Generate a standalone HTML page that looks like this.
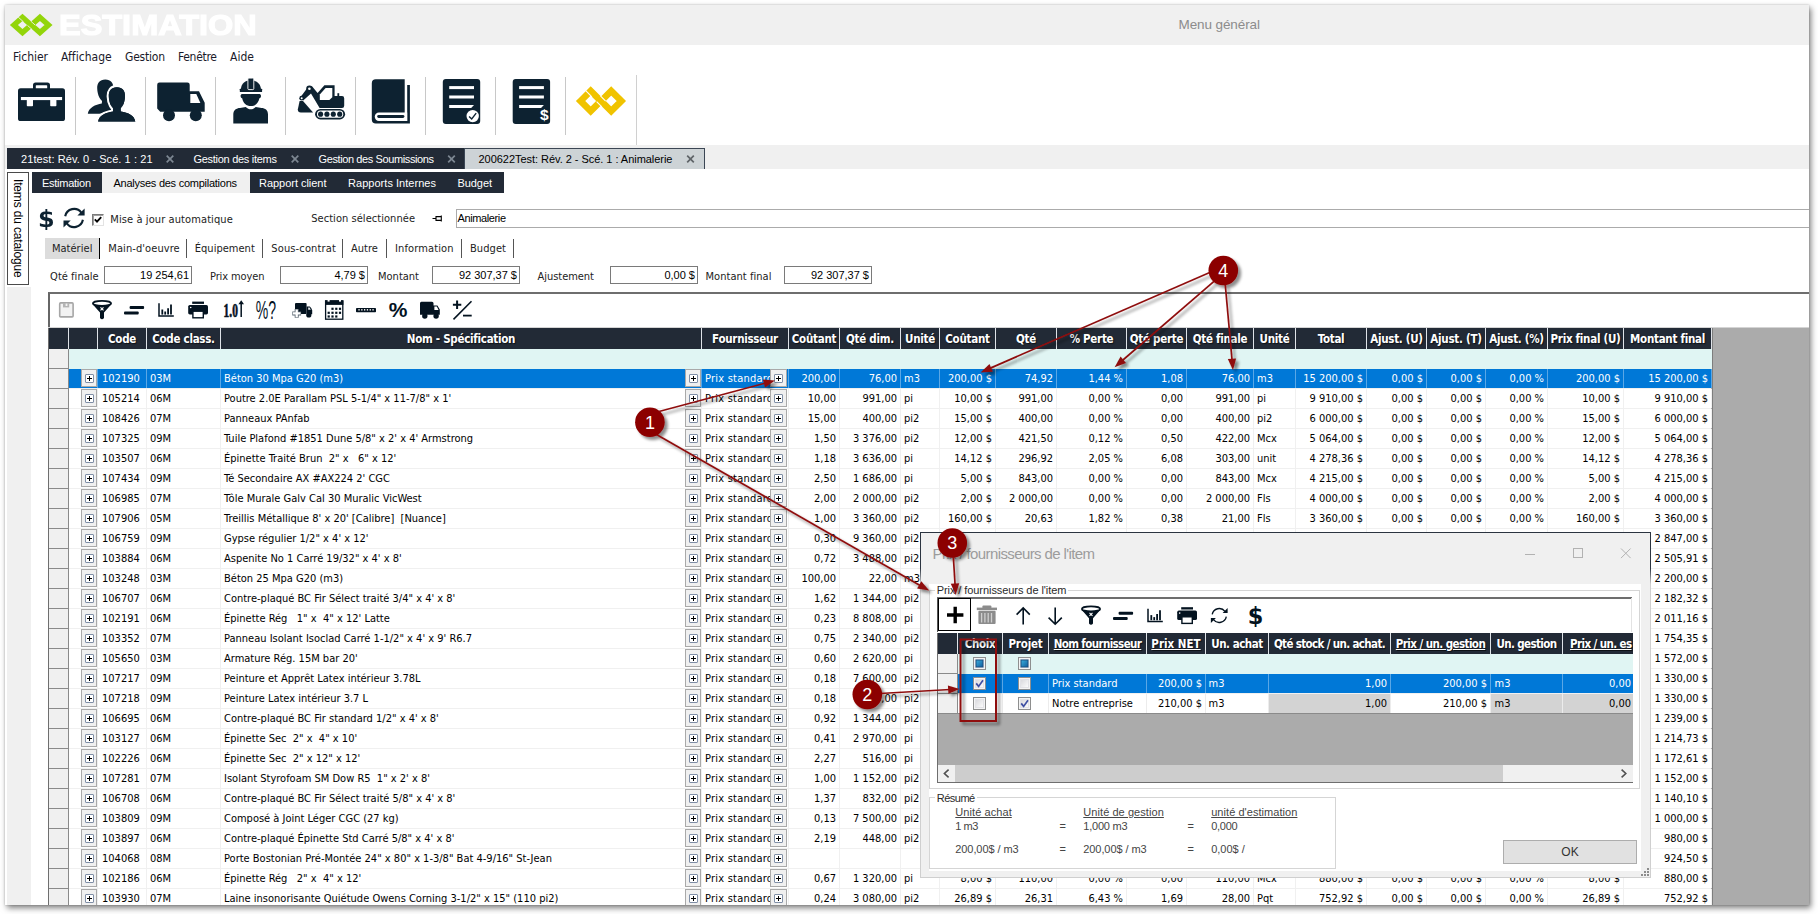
<!DOCTYPE html>
<html lang="fr"><head><meta charset="utf-8"><title>Estimation</title>
<style>
html,body{margin:0;padding:0;background:#fff;}
body{width:1818px;height:914px;overflow:hidden;position:relative;font-family:"DejaVu Sans Condensed","Liberation Sans",sans-serif;font-size:11px;color:#000;}
#shadow{position:absolute;left:5px;top:5px;width:1804px;height:900px;background:#fff;box-shadow:2px 3px 6px rgba(0,0,0,.5),0 0 2px rgba(0,0,0,.2);}
#clip{position:absolute;left:5px;top:5px;width:1804px;height:900px;overflow:hidden;}
#pg{position:absolute;left:-5px;top:-5px;width:1818px;height:914px;}
.a{position:absolute;}
.t{position:absolute;white-space:pre;line-height:14px;}
.lib{font-family:"Liberation Sans",sans-serif;}
.dj{font-family:"DejaVu Sans Condensed","Liberation Sans",sans-serif;}
/* main grid */
.r{position:absolute;left:49px;width:1662px;height:19px;border-bottom:1px solid #f0f0f0;background:#fff;}
.r i{position:absolute;top:0;height:19px;line-height:19px;font-style:normal;white-space:pre;overflow:hidden;box-sizing:border-box;border-right:1px solid #f0f0f0;}
.r.sel{background:#0078d7;color:#fff;}
.r.sel i{border-right-color:#5aa7e6;}
.r .ind{left:0;width:20px;height:20px;background:#f0f0f0;border-right:1px solid #8a8a8a;border-bottom:1px solid #8a8a8a;}
.r.sel .ind{border-right-color:#8a8a8a;}
.r .x0{left:20px;width:29px;background:#fff;}
.r.sel .x0{background:#0078d7;}
.pl{position:absolute;top:0;width:16px;height:18px;box-sizing:border-box;border:1px solid #a9a9a9;background:#f0f0f0;}
.pl:before{content:"";position:absolute;left:3px;top:4px;width:7px;height:7px;border:1px solid #7f8ea6;background:#fff;border-radius:1px;}
.pl:after{content:"";position:absolute;left:5px;top:8px;width:5px;height:1px;background:#000;box-shadow:0 0 0 0 #000;}
.pl b{position:absolute;left:7px;top:6px;width:1px;height:5px;background:#000;}
.L{padding-left:3px;text-align:left;}
.r .code{padding-left:4px;}
.r .four{letter-spacing:.22px;}
.R{padding-right:3px;text-align:right;}
.h{position:absolute;top:328px;height:21px;line-height:22px;font-size:11.5px;letter-spacing:-.28px;color:#fff;font-weight:bold;text-align:center;white-space:pre;box-sizing:border-box;border-right:1px solid #dfe3e8;text-shadow:1px 1px 1px rgba(0,0,0,.6);overflow:hidden;}
.dh{font-size:11.5px;}
.rs{font-size:11px;color:#454545;line-height:13px;}
.r .code{left:49px;width:49px;}
.r .cls{left:98px;width:74px;}
.r .nom{left:172px;width:481px;}
.r .four{left:653px;width:87px;}
.r .c1{left:740px;width:51px;}
.r .qd{left:791px;width:61px;}
.r .u1{left:852px;width:39px;}
.r .c2{left:891px;width:56px;}
.r .q{left:947px;width:61px;}
.r .p{left:1008px;width:70px;}
.r .qp{left:1078px;width:60px;}
.r .qf{left:1138px;width:67px;}
.r .u2{left:1205px;width:42px;}
.r .tot{left:1247px;width:71px;}
.r .au{left:1318px;width:60px;}
.r .at{left:1378px;width:59px;}
.r .ap{left:1437px;width:62px;}
.r .pf{left:1499px;width:76px;}
.r .mf{left:1575px;width:88px;}
</style></head>
<body>
<div id="shadow"></div>
<div id="clip"><div id="pg">
<div class="a" style="left:5px;top:5px;width:1804px;height:40px;background:#f0f0f0;"></div>
<svg class="a" style="left:5px;top:5px;" width="60" height="40" viewBox="0 0 60 40"><g transform="translate(26.20 20.00) scale(0.850 0.757)" fill="none" stroke="#93d50a" stroke-width="6.70" stroke-linejoin="miter"><path d="M-20.35 0 L-10.25 -10.10 L-0.15 0 L-10.25 10.10 Z"/><path d="M0.15 0 L10.25 -10.10 L20.35 0 L10.25 10.10 Z"/><g stroke="#f0f0f0" stroke-width="1.1"><path d="M-15.25 -10.36 L-9.05 -4.16"/><path d="M-4.30 0.59 L0.90 5.79"/><path d="M-0.50 -5.09 L4.70 0.11"/></g></g></svg>
<div class="t lib" id="brand" style="left:59px;top:8px;font-size:29.5px;line-height:34px;font-weight:bold;color:#fff;letter-spacing:0;-webkit-text-stroke:1.2px #fff;transform-origin:0 0;transform:scaleX(1.10);">ESTIMATION</div>
<div class="t lib" style="left:1178.5px;top:17px;font-size:13.5px;line-height:16px;font-weight:normal;color:#8c8c8c;letter-spacing:-0.097px;">Menu général</div>
<div class="t dj" style="left:13px;top:50px;font-size:12px;line-height:14px;font-weight:normal;color:#1a1a2a;letter-spacing:-0.034px;">Fichier</div>
<div class="t dj" style="left:61px;top:50px;font-size:12px;line-height:14px;font-weight:normal;color:#1a1a2a;letter-spacing:0.035px;">Affichage</div>
<div class="t dj" style="left:125px;top:50px;font-size:12px;line-height:14px;font-weight:normal;color:#1a1a2a;letter-spacing:-0.221px;">Gestion</div>
<div class="t dj" style="left:178px;top:50px;font-size:12px;line-height:14px;font-weight:normal;color:#1a1a2a;letter-spacing:-0.289px;">Fenêtre</div>
<div class="t dj" style="left:230px;top:50px;font-size:12px;line-height:14px;font-weight:normal;color:#1a1a2a;letter-spacing:0.036px;">Aide</div>
<div class="a" style="left:75px;top:77px;width:1px;height:58px;background:#c8c8c8;"></div>
<div class="a" style="left:145px;top:77px;width:1px;height:58px;background:#c8c8c8;"></div>
<div class="a" style="left:215px;top:77px;width:1px;height:58px;background:#c8c8c8;"></div>
<div class="a" style="left:285px;top:77px;width:1px;height:58px;background:#c8c8c8;"></div>
<div class="a" style="left:355px;top:77px;width:1px;height:58px;background:#c8c8c8;"></div>
<div class="a" style="left:425px;top:77px;width:1px;height:58px;background:#c8c8c8;"></div>
<div class="a" style="left:495px;top:77px;width:1px;height:58px;background:#c8c8c8;"></div>
<div class="a" style="left:565px;top:77px;width:1px;height:58px;background:#c8c8c8;"></div>
<div class="a" style="left:636px;top:75px;width:1px;height:70px;background:#d0d0d0;"></div>
<div class="a" style="left:5px;top:145px;width:1804px;height:24px;background:#f0f0f0;"></div>
<div class="a" style="left:7px;top:287px;width:24px;height:622px;background:#f0f0f0;"></div>
<svg class="a" style="left:0;top:70px" width="640" height="70" viewBox="0 70 640 70"><g fill="#0d2231"><rect x="18" y="88.3" width="47" height="32.7" rx="2.6"/><path fill-rule="evenodd" d="M35.6 82.4 H47.4 A2.6 2.6 0 0 1 50 85 V90 H33 V85 A2.6 2.6 0 0 1 35.6 82.4 Z M36.4 85.2 A.6 .6 0 0 0 35.8 85.8 V89 H47.2 V85.8 A.6 .6 0 0 0 46.6 85.2 Z"/><g fill="#fff"><rect x="20.9" y="97" width="41.2" height="3.1"/><rect x="26.8" y="99" width="6.2" height="7.3" rx=".8"/><rect x="50.2" y="99" width="6.2" height="7.3" rx=".8"/></g><path d="M105.3 79.4 C111 79.4 113.5 83 113.4 88.2 C113.3 95.2 110 102 105.3 102 C100.6 102 97.3 95.2 97.2 88.2 C97.1 83 99.6 79.4 105.3 79.4 Z"/><path d="M87.8 113.8 C88.5 107.6 95.5 104.4 101.8 103.4 L102.2 99 H110 L112 111 C106 112 102 113 99.5 113.8 Z"/><g stroke="#fff" stroke-width="4.4" paint-order="stroke" stroke-linejoin="round"><path d="M116.9 87.3 C122.6 87.3 125.1 91 125 96.2 C124.9 103.2 121.6 110 116.9 110 C112.2 110 108.9 103.2 108.8 96.2 C108.7 91 111.2 87.3 116.9 87.3 Z"/><path d="M98.1 121.7 C99 115.6 105.5 112.8 113 111.6 L113.4 106 H120.4 L120.8 111.6 C128.3 112.8 134.5 115.6 135.3 121.7 Z"/></g><path d="M116.9 87.3 C122.6 87.3 125.1 91 125 96.2 C124.9 103.2 121.6 110 116.9 110 C112.2 110 108.9 103.2 108.8 96.2 C108.7 91 111.2 87.3 116.9 87.3 Z"/><path d="M98.1 121.7 C99 115.6 105.5 112.8 113 111.6 L113.4 106 H120.4 L120.8 111.6 C128.3 112.8 134.5 115.6 135.3 121.7 Z"/><rect x="96" y="121.8" width="42" height="3" fill="#fff"/><path d="M159.6 82.4 H187.4 A2.3 2.3 0 0 1 189.7 84.7 V91.2 H199 L204.7 102.8 V111.7 H160.2 L157.2 108.6 V84.7 A2.3 2.3 0 0 1 159.6 82.4 Z"/><path fill="#fff" d="M190.3 94 H196.3 L200.4 103.1 H190.3 Z"/><circle cx="169" cy="115.2" r="6"/><circle cx="195.8" cy="115.2" r="6"/><path d="M240.9 89.2 C241.2 83.5 245.5 80.3 251 80.3 C256.5 80.3 260.6 83.5 261 89.2 Z"/><rect x="239.8" y="88.7" width="22.3" height="3.3" rx=".6"/><rect x="247.9" y="78.1" width="5.9" height="11.5" rx="1" stroke="#fff" stroke-width=".9"/><path d="M242 94 H259.6 C261.6 94.3 261.4 97.9 259.4 98.3 C258.5 103.4 255 106.1 250.8 106.1 C246.6 106.1 243 103.4 242.2 98.3 C240.2 97.9 240 94.3 242 94 Z"/><path d="M233.3 123.5 V114.5 C233.3 109.8 236.5 108 240 107.9 L245.8 107 C247.4 108.7 249 109.3 250.8 109.3 C252.6 109.3 254.1 108.7 255.7 107 L261.5 107.9 C265 108 268 109.8 268 114.5 V123.5 Z"/><rect x="315.1" y="108.9" width="30" height="10.5" rx="5.25"/><rect x="317" y="110.6" width="26.2" height="7.1" rx="3.55" fill="#fff"/><circle cx="320.6" cy="114.15" r="2.55"/><circle cx="326.9" cy="114.15" r="2.55"/><circle cx="333.3" cy="114.15" r="2.55"/><circle cx="339.7" cy="114.15" r="2.55"/><path d="M324.4 85.3 H334.6 V96 H342 A2.2 2.2 0 0 1 344.2 98.2 V105.7 A2.2 2.2 0 0 1 342 107.9 H319.6 L311 93.5 L303.2 100.6 L300.4 97.2 L308.6 86.2 L312.2 86.6 L317.6 93 Z"/><path fill="#fff" d="M319.8 94.6 L325.6 88.1 H332.3 V97.2 L329.4 100 H319.8 Z"/><rect x="337.4" y="93.2" width="1.8" height="3.4"/><circle cx="309.4" cy="88.8" r="3.2"/><circle cx="309.4" cy="88.8" r="1.3" fill="#fff"/><circle cx="301.7" cy="98.2" r="2.4"/><circle cx="301.7" cy="98.2" r="1" fill="#fff"/><path d="M299.6 101 H303 L313.1 112.5 H300.8 A3 3 0 0 1 297.8 109.5 Z"/><path d="M375.8 79.2 H404.7 V120.9 H407.2 V84.9 H409.9 V123.5 H375.8 A4 4 0 0 1 371.8 119.5 V83.2 A4 4 0 0 1 375.8 79.2 Z"/><path fill="#fff" d="M378.9 112.6 H407.2 V120.9 H378.9 A4.15 4.15 0 0 1 378.9 112.6 Z"/><rect x="377.2" y="115" width="27.2" height="2.9" rx="1.45"/><rect x="442.8" y="79" width="37.4" height="44.9" rx="3"/><g fill="#fff"><rect x="449.2" y="86.1" width="24.8" height="3"/><rect x="449.2" y="95.5" width="24.8" height="3"/><path d="M449.2 104.9 H474.0 L471.2 107.9 H449.2 Z"/></g><rect x="512.7" y="79" width="37.4" height="44.9" rx="3"/><g fill="#fff"><rect x="519.1" y="86.1" width="24.8" height="3"/><rect x="519.1" y="95.5" width="24.8" height="3"/><path d="M519.1 104.9 H543.9 L541.1 107.9 H519.1 Z"/></g><circle cx="472.7" cy="116.1" r="6.2" fill="#fff"/><path d="M469.1 116.4 L471.7 118.9 L476.2 113.1" fill="none" stroke="#0d2231" stroke-width="1.4"/><text x="544.2" y="120.4" text-anchor="middle" fill="#fff" font-family="Liberation Sans, sans-serif" font-weight="bold" font-size="15.5">$</text></g><g transform="translate(600.95 101.00) scale(1.000 1.000)" fill="none" stroke="#f0c300" stroke-width="6.70" stroke-linejoin="miter"><path d="M-20.35 0 L-10.25 -10.10 L-0.15 0 L-10.25 10.10 Z"/><path d="M0.15 0 L10.25 -10.10 L20.35 0 L10.25 10.10 Z"/><g stroke="#fff" stroke-width="1.1"><path d="M-15.25 -10.36 L-9.05 -4.16"/><path d="M-4.30 0.59 L0.90 5.79"/><path d="M-0.50 -5.09 L4.70 0.11"/></g></g></svg>
<div class="a" style="left:7px;top:148px;width:458px;height:21px;background:#222a36;"></div>
<div class="a" style="left:464px;top:148px;width:241px;height:21px;background:#cdd3d6;border:1px solid #3b4654;border-bottom:none;box-sizing:border-box;"></div>
<div class="t lib" style="left:21px;top:152px;font-size:11px;line-height:14px;font-weight:normal;color:#fff;letter-spacing:0.077px;">21test: Rév. 0 - Scé. 1 : 21</div>
<div class="t lib" style="left:193.5px;top:152px;font-size:11px;line-height:14px;font-weight:normal;color:#fff;letter-spacing:-0.284px;">Gestion des items</div>
<div class="t lib" style="left:318.5px;top:152px;font-size:11px;line-height:14px;font-weight:normal;color:#fff;letter-spacing:-0.392px;">Gestion des Soumissions</div>
<div class="t lib" style="left:478.5px;top:152px;font-size:11px;line-height:14px;font-weight:normal;color:#000;letter-spacing:-0.038px;">200622Test: Rév. 2 - Scé. 1 : Animalerie</div>
<svg class="a" style="left:0;top:148px" width="720" height="22" viewBox="0 148 720 22"><path d="M166.7 155.7 l6.6 6.6 m0 -6.6 l-6.6 6.6" stroke="#7d8792" stroke-width="1.7" fill="none"/><path d="M291.7 155.7 l6.6 6.6 m0 -6.6 l-6.6 6.6" stroke="#7d8792" stroke-width="1.7" fill="none"/><path d="M448.2 155.7 l6.6 6.6 m0 -6.6 l-6.6 6.6" stroke="#7d8792" stroke-width="1.7" fill="none"/><path d="M687.2 155.7 l6.6 6.6 m0 -6.6 l-6.6 6.6" stroke="#5f6468" stroke-width="1.7" fill="none"/></svg>
<div class="a" style="left:7px;top:172px;width:22px;height:113px;background:#fff;border:1px solid #4a4a4a;box-sizing:border-box;"></div>
<div class="t lib" style="left:25px;top:179.2px;font-size:12px;line-height:14px;font-weight:normal;color:#000;letter-spacing:-0.159px;transform-origin:0 0;transform:rotate(90deg);">Items du catalogue</div>
<div class="a" style="left:32px;top:172px;width:472px;height:21px;background:#222a36;"></div>
<div class="a" style="left:102px;top:172px;width:148px;height:21px;background:#f0f0f0;"></div>
<div class="t lib" style="left:42px;top:176px;font-size:11px;line-height:14px;font-weight:normal;color:#fff;letter-spacing:-0.262px;">Estimation</div>
<div class="t lib" style="left:113.5px;top:176px;font-size:11px;line-height:14px;font-weight:normal;color:#000;letter-spacing:-0.255px;">Analyses des compilations</div>
<div class="t lib" style="left:259px;top:176px;font-size:11px;line-height:14px;font-weight:normal;color:#fff;letter-spacing:-0.029px;">Rapport client</div>
<div class="t lib" style="left:348px;top:176px;font-size:11px;line-height:14px;font-weight:normal;color:#fff;letter-spacing:0.035px;">Rapports Internes</div>
<div class="t lib" style="left:457.5px;top:176px;font-size:11px;line-height:14px;font-weight:normal;color:#fff;letter-spacing:-0.075px;">Budget</div>
<div class="t" style="left:38.4px;top:204.6px;font-family:'DejaVu Sans',sans-serif;font-weight:bold;font-size:23px;line-height:28px;transform-origin:0 0;transform:scaleX(1.04);color:#0d2231;">$</div>
<svg class="a" style="left:60px;top:205px" width="30" height="26" viewBox="60 205 30 26"><g fill="none" stroke="#0d2231" stroke-width="2.1"><path d="M65.2 216.2 A9 9 0 0 1 81.3 212.6"/><path d="M82.9 219.8 A9 9 0 0 1 66.8 223.4"/></g><path fill="#0d2231" d="M84.6 208.4 V215.6 H77.4 Z"/><path fill="#0d2231" d="M63.5 227.6 V220.4 H70.7 Z"/></svg>
<div class="a" style="left:92px;top:214px;width:12px;height:12px;box-sizing:border-box;background:#fff;border:1px solid #e3e3e3;border-top-color:#7a7a7a;border-left-color:#7a7a7a;box-shadow:inset 1px 1px 0 #a0a0a0;"></div>
<svg class="a" style="left:92px;top:214px" width="12" height="12" viewBox="0 0 12 12"><path d="M2.8 5.4 L5 7.6 L9.2 3.2" fill="none" stroke="#000" stroke-width="1.9"/></svg>
<div class="t dj" style="left:110.3px;top:213px;font-size:11px;line-height:14px;font-weight:normal;color:#222;letter-spacing:0.094px;">Mise à jour automatique</div>
<div class="t dj" style="left:311.2px;top:212px;font-size:11px;line-height:14px;font-weight:normal;color:#222;letter-spacing:0.05px;">Section sélectionnée</div>
<svg class="a" style="left:431px;top:213px" width="13" height="11" viewBox="0 0 13 11"><path d="M1.5 5.5 H5 M5 3 V8 M5 3.6 H10.3 V7.4 H5 M10.3 2.6 V8.4" fill="none" stroke="#000" stroke-width="1.1"/></svg>
<div class="a" style="left:456px;top:209px;width:1370px;height:19px;background:#fff;border:1px solid #ababab;box-sizing:border-box;"></div>
<div class="t lib" style="left:457.5px;top:211px;font-size:11px;line-height:14px;font-weight:normal;color:#000;letter-spacing:-0.385px;">Animalerie</div>
<div class="a" style="left:45px;top:238px;width:54px;height:21px;background:#dcdcdc;"></div>
<div class="a" style="left:99px;top:238px;width:1px;height:21px;background:#000;"></div>
<div class="a" style="left:186px;top:239px;width:1px;height:19px;background:#555;"></div>
<div class="a" style="left:262px;top:239px;width:1px;height:19px;background:#555;"></div>
<div class="a" style="left:342px;top:239px;width:1px;height:19px;background:#555;"></div>
<div class="a" style="left:386px;top:239px;width:1px;height:19px;background:#555;"></div>
<div class="a" style="left:461px;top:239px;width:1px;height:19px;background:#555;"></div>
<div class="a" style="left:513px;top:239px;width:1px;height:19px;background:#555;"></div>
<div class="t dj" style="left:51.9px;top:242px;font-size:11px;line-height:14px;font-weight:normal;color:#222;letter-spacing:0.038px;">Matériel</div>
<div class="t dj" style="left:108.3px;top:242px;font-size:11px;line-height:14px;font-weight:normal;color:#222;letter-spacing:0.084px;">Main-d'oeuvre</div>
<div class="t dj" style="left:194.8px;top:242px;font-size:11px;line-height:14px;font-weight:normal;color:#222;letter-spacing:0.019px;">Équipement</div>
<div class="t dj" style="left:271.3px;top:242px;font-size:11px;line-height:14px;font-weight:normal;color:#222;letter-spacing:0.136px;">Sous-contrat</div>
<div class="t dj" style="left:351px;top:242px;font-size:11px;line-height:14px;font-weight:normal;color:#222;letter-spacing:-0.011px;">Autre</div>
<div class="t dj" style="left:395px;top:242px;font-size:11px;line-height:14px;font-weight:normal;color:#222;letter-spacing:0.123px;">Information</div>
<div class="t dj" style="left:470px;top:242px;font-size:11px;line-height:14px;font-weight:normal;color:#222;letter-spacing:0.078px;">Budget</div>
<div class="t dj" style="left:50.1px;top:270px;font-size:11px;line-height:14px;font-weight:normal;color:#222;letter-spacing:0.03px;">Qté finale</div>
<div class="t dj" style="left:210px;top:270px;font-size:11px;line-height:14px;font-weight:normal;color:#222;letter-spacing:-0.122px;">Prix moyen</div>
<div class="t dj" style="left:378px;top:270px;font-size:11px;line-height:14px;font-weight:normal;color:#222;letter-spacing:0.005px;">Montant</div>
<div class="t dj" style="left:537.5px;top:270px;font-size:11px;line-height:14px;font-weight:normal;color:#222;letter-spacing:-0.035px;">Ajustement</div>
<div class="t dj" style="left:705.5px;top:270px;font-size:11px;line-height:14px;font-weight:normal;color:#222;letter-spacing:0.047px;">Montant final</div>
<div class="a lib" style="left:104px;top:266px;width:88px;height:18px;box-sizing:border-box;border:1px solid #7a7a7a;background:#fff;text-align:right;padding-right:2px;font-size:11px;line-height:16px;white-space:pre;">19 254,61</div>
<div class="a lib" style="left:280px;top:266px;width:88px;height:18px;box-sizing:border-box;border:1px solid #7a7a7a;background:#fff;text-align:right;padding-right:2px;font-size:11px;line-height:16px;white-space:pre;">4,79 $</div>
<div class="a lib" style="left:432px;top:266px;width:88px;height:18px;box-sizing:border-box;border:1px solid #7a7a7a;background:#fff;text-align:right;padding-right:2px;font-size:11px;line-height:16px;white-space:pre;">92 307,37 $</div>
<div class="a lib" style="left:610px;top:266px;width:88px;height:18px;box-sizing:border-box;border:1px solid #7a7a7a;background:#fff;text-align:right;padding-right:2px;font-size:11px;line-height:16px;white-space:pre;">0,00 $</div>
<div class="a lib" style="left:784px;top:266px;width:88px;height:18px;box-sizing:border-box;border:1px solid #7a7a7a;background:#fff;text-align:right;padding-right:2px;font-size:11px;line-height:16px;white-space:pre;">92 307,37 $</div>
<div class="a" style="left:48px;top:292px;width:1770px;height:35px;background:#fff;border-top:2px solid #6e6e6e;border-left:2px solid #666;box-sizing:border-box;"></div>
<div class="a" style="left:48px;top:327px;width:1770px;height:1px;background:#d4d4d4;"></div>
<div class="a" style="left:48px;top:328px;width:1px;height:590px;background:#6e6e6e;"></div>
<div class="a" style="left:49px;top:328px;width:1770px;height:590px;background:#ababab;"></div>
<div class="a" style="left:1712px;top:328px;width:1px;height:590px;background:#7d7d7d;"></div>
<div class="a" style="left:49px;top:328px;width:1663px;height:21px;background:#222a36;"></div>
<div class="h" style="left:49px;width:20px;"></div>
<div class="h" style="left:69px;width:29px;"></div>
<div class="h" style="left:98px;width:49px;">Code</div>
<div class="h" style="left:147px;width:74px;">Code class.</div>
<div class="h" style="left:221px;width:481px;">Nom - Spécification</div>
<div class="h" style="left:702px;width:87px;">Fournisseur</div>
<div class="h" style="left:789px;width:51px;">Coûtant</div>
<div class="h" style="left:840px;width:61px;">Qté dim.</div>
<div class="h" style="left:901px;width:39px;">Unité</div>
<div class="h" style="left:940px;width:56px;">Coûtant</div>
<div class="h" style="left:996px;width:61px;">Qté</div>
<div class="h" style="left:1057px;width:70px;">% Perte</div>
<div class="h" style="left:1127px;width:60px;">Qté perte</div>
<div class="h" style="left:1187px;width:67px;">Qté finale</div>
<div class="h" style="left:1254px;width:42px;">Unité</div>
<div class="h" style="left:1296px;width:71px;">Total</div>
<div class="h" style="left:1367px;width:60px;">Ajust. (U)</div>
<div class="h" style="left:1427px;width:59px;">Ajust. (T)</div>
<div class="h" style="left:1486px;width:62px;">Ajust. (%)</div>
<div class="h" style="left:1548px;width:76px;">Prix final (U)</div>
<div class="h" style="left:1624px;width:88px;">Montant final</div>
<div class="a" style="left:49px;top:349px;width:1663px;height:20px;background:#e0f5f3;"></div>
<div class="a" style="left:49px;top:349px;width:19px;height:19px;background:#f0f0f0;border-right:1px solid #8a8a8a;border-bottom:1px solid #8a8a8a;"></div>
<div class="r sel" style="top:369px"><i class="ind"></i><i class="x0"></i><span class="pl" style="left:32px"><b></b></span><i class="code L">102190</i><i class="cls L">03M</i><i class="nom L">Béton 30 Mpa G20 (m3)</i><i class="four L">Prix standard</i><i class="c1 R">200,00</i><i class="qd R">76,00</i><i class="u1 L">m3</i><i class="c2 R">200,00 $</i><i class="q R">74,92</i><i class="p R">1,44 %</i><i class="qp R">1,08</i><i class="qf R">76,00</i><i class="u2 L">m3</i><i class="tot R">15 200,00 $</i><i class="au R">0,00 $</i><i class="at R">0,00 $</i><i class="ap R">0,00 %</i><i class="pf R">200,00 $</i><i class="mf R">15 200,00 $</i><span class="pl" style="left:636px"><b></b></span><span class="pl" style="left:721px;width:17px"><b></b></span></div>
<div class="r" style="top:389px"><i class="ind"></i><i class="x0"></i><span class="pl" style="left:32px"><b></b></span><i class="code L">105214</i><i class="cls L">06M</i><i class="nom L">Poutre 2.0E Parallam PSL 5-1/4" x 11-7/8" x 1'</i><i class="four L">Prix standard</i><i class="c1 R">10,00</i><i class="qd R">991,00</i><i class="u1 L">pi</i><i class="c2 R">10,00 $</i><i class="q R">991,00</i><i class="p R">0,00 %</i><i class="qp R">0,00</i><i class="qf R">991,00</i><i class="u2 L">pi</i><i class="tot R">9 910,00 $</i><i class="au R">0,00 $</i><i class="at R">0,00 $</i><i class="ap R">0,00 %</i><i class="pf R">10,00 $</i><i class="mf R">9 910,00 $</i><span class="pl" style="left:636px"><b></b></span><span class="pl" style="left:721px;width:17px"><b></b></span></div>
<div class="r" style="top:409px"><i class="ind"></i><i class="x0"></i><span class="pl" style="left:32px"><b></b></span><i class="code L">108426</i><i class="cls L">07M</i><i class="nom L">Panneaux PAnfab</i><i class="four L">Prix standard</i><i class="c1 R">15,00</i><i class="qd R">400,00</i><i class="u1 L">pi2</i><i class="c2 R">15,00 $</i><i class="q R">400,00</i><i class="p R">0,00 %</i><i class="qp R">0,00</i><i class="qf R">400,00</i><i class="u2 L">pi2</i><i class="tot R">6 000,00 $</i><i class="au R">0,00 $</i><i class="at R">0,00 $</i><i class="ap R">0,00 %</i><i class="pf R">15,00 $</i><i class="mf R">6 000,00 $</i><span class="pl" style="left:636px"><b></b></span><span class="pl" style="left:721px;width:17px"><b></b></span></div>
<div class="r" style="top:429px"><i class="ind"></i><i class="x0"></i><span class="pl" style="left:32px"><b></b></span><i class="code L">107325</i><i class="cls L">09M</i><i class="nom L">Tuile Plafond #1851 Dune 5/8" x 2' x 4' Armstrong</i><i class="four L">Prix standard</i><i class="c1 R">1,50</i><i class="qd R">3 376,00</i><i class="u1 L">pi2</i><i class="c2 R">12,00 $</i><i class="q R">421,50</i><i class="p R">0,12 %</i><i class="qp R">0,50</i><i class="qf R">422,00</i><i class="u2 L">Mcx</i><i class="tot R">5 064,00 $</i><i class="au R">0,00 $</i><i class="at R">0,00 $</i><i class="ap R">0,00 %</i><i class="pf R">12,00 $</i><i class="mf R">5 064,00 $</i><span class="pl" style="left:636px"><b></b></span><span class="pl" style="left:721px;width:17px"><b></b></span></div>
<div class="r" style="top:449px"><i class="ind"></i><i class="x0"></i><span class="pl" style="left:32px"><b></b></span><i class="code L">103507</i><i class="cls L">06M</i><i class="nom L">Épinette Traité Brun  2" x   6" x 12'</i><i class="four L">Prix standard</i><i class="c1 R">1,18</i><i class="qd R">3 636,00</i><i class="u1 L">pi</i><i class="c2 R">14,12 $</i><i class="q R">296,92</i><i class="p R">2,05 %</i><i class="qp R">6,08</i><i class="qf R">303,00</i><i class="u2 L">unit</i><i class="tot R">4 278,36 $</i><i class="au R">0,00 $</i><i class="at R">0,00 $</i><i class="ap R">0,00 %</i><i class="pf R">14,12 $</i><i class="mf R">4 278,36 $</i><span class="pl" style="left:636px"><b></b></span><span class="pl" style="left:721px;width:17px"><b></b></span></div>
<div class="r" style="top:469px"><i class="ind"></i><i class="x0"></i><span class="pl" style="left:32px"><b></b></span><i class="code L">107434</i><i class="cls L">09M</i><i class="nom L">Té Secondaire AX #AX224 2' CGC</i><i class="four L">Prix standard</i><i class="c1 R">2,50</i><i class="qd R">1 686,00</i><i class="u1 L">pi</i><i class="c2 R">5,00 $</i><i class="q R">843,00</i><i class="p R">0,00 %</i><i class="qp R">0,00</i><i class="qf R">843,00</i><i class="u2 L">Mcx</i><i class="tot R">4 215,00 $</i><i class="au R">0,00 $</i><i class="at R">0,00 $</i><i class="ap R">0,00 %</i><i class="pf R">5,00 $</i><i class="mf R">4 215,00 $</i><span class="pl" style="left:636px"><b></b></span><span class="pl" style="left:721px;width:17px"><b></b></span></div>
<div class="r" style="top:489px"><i class="ind"></i><i class="x0"></i><span class="pl" style="left:32px"><b></b></span><i class="code L">106985</i><i class="cls L">07M</i><i class="nom L">Tôle Murale Galv Cal 30 Muralic VicWest</i><i class="four L">Prix standard</i><i class="c1 R">2,00</i><i class="qd R">2 000,00</i><i class="u1 L">pi2</i><i class="c2 R">2,00 $</i><i class="q R">2 000,00</i><i class="p R">0,00 %</i><i class="qp R">0,00</i><i class="qf R">2 000,00</i><i class="u2 L">Fls</i><i class="tot R">4 000,00 $</i><i class="au R">0,00 $</i><i class="at R">0,00 $</i><i class="ap R">0,00 %</i><i class="pf R">2,00 $</i><i class="mf R">4 000,00 $</i><span class="pl" style="left:636px"><b></b></span><span class="pl" style="left:721px;width:17px"><b></b></span></div>
<div class="r" style="top:509px"><i class="ind"></i><i class="x0"></i><span class="pl" style="left:32px"><b></b></span><i class="code L">107906</i><i class="cls L">05M</i><i class="nom L">Treillis Métallique 8' x 20' [Calibre]  [Nuance]</i><i class="four L">Prix standard</i><i class="c1 R">1,00</i><i class="qd R">3 360,00</i><i class="u1 L">pi2</i><i class="c2 R">160,00 $</i><i class="q R">20,63</i><i class="p R">1,82 %</i><i class="qp R">0,38</i><i class="qf R">21,00</i><i class="u2 L">Fls</i><i class="tot R">3 360,00 $</i><i class="au R">0,00 $</i><i class="at R">0,00 $</i><i class="ap R">0,00 %</i><i class="pf R">160,00 $</i><i class="mf R">3 360,00 $</i><span class="pl" style="left:636px"><b></b></span><span class="pl" style="left:721px;width:17px"><b></b></span></div>
<div class="r" style="top:529px"><i class="ind"></i><i class="x0"></i><span class="pl" style="left:32px"><b></b></span><i class="code L">106759</i><i class="cls L">09M</i><i class="nom L">Gypse régulier 1/2" x 4' x 12'</i><i class="four L">Prix standard</i><i class="c1 R">0,30</i><i class="qd R">9 360,00</i><i class="u1 L">pi2</i><i class="c2 R">14,60 $</i><i class="q R">192,12</i><i class="p R">1,50 %</i><i class="qp R">2,88</i><i class="qf R">195,00</i><i class="u2 L">Fls</i><i class="tot R">2 847,00 $</i><i class="au R">0,00 $</i><i class="at R">0,00 $</i><i class="ap R">0,00 %</i><i class="pf R">14,60 $</i><i class="mf R">2 847,00 $</i><span class="pl" style="left:636px"><b></b></span><span class="pl" style="left:721px;width:17px"><b></b></span></div>
<div class="r" style="top:549px"><i class="ind"></i><i class="x0"></i><span class="pl" style="left:32px"><b></b></span><i class="code L">103884</i><i class="cls L">06M</i><i class="nom L">Aspenite No 1 Carré 19/32" x 4' x 8'</i><i class="four L">Prix standard</i><i class="c1 R">0,72</i><i class="qd R">3 488,00</i><i class="u1 L">pi2</i><i class="c2 R">22,99 $</i><i class="q R">109,00</i><i class="p R">0,00 %</i><i class="qp R">0,00</i><i class="qf R">109,00</i><i class="u2 L">Fls</i><i class="tot R">2 505,91 $</i><i class="au R">0,00 $</i><i class="at R">0,00 $</i><i class="ap R">0,00 %</i><i class="pf R">22,99 $</i><i class="mf R">2 505,91 $</i><span class="pl" style="left:636px"><b></b></span><span class="pl" style="left:721px;width:17px"><b></b></span></div>
<div class="r" style="top:569px"><i class="ind"></i><i class="x0"></i><span class="pl" style="left:32px"><b></b></span><i class="code L">103248</i><i class="cls L">03M</i><i class="nom L">Béton 25 Mpa G20 (m3)</i><i class="four L">Prix standard</i><i class="c1 R">100,00</i><i class="qd R">22,00</i><i class="u1 L">m3</i><i class="c2 R">100,00 $</i><i class="q R">21,58</i><i class="p R">1,95 %</i><i class="qp R">0,42</i><i class="qf R">22,00</i><i class="u2 L">m3</i><i class="tot R">2 200,00 $</i><i class="au R">0,00 $</i><i class="at R">0,00 $</i><i class="ap R">0,00 %</i><i class="pf R">100,00 $</i><i class="mf R">2 200,00 $</i><span class="pl" style="left:636px"><b></b></span><span class="pl" style="left:721px;width:17px"><b></b></span></div>
<div class="r" style="top:589px"><i class="ind"></i><i class="x0"></i><span class="pl" style="left:32px"><b></b></span><i class="code L">106707</i><i class="cls L">06M</i><i class="nom L">Contre-plaqué BC Fir Sélect traité 3/4" x 4' x 8'</i><i class="four L">Prix standard</i><i class="c1 R">1,62</i><i class="qd R">1 344,00</i><i class="u1 L">pi2</i><i class="c2 R">51,96 $</i><i class="q R">42,00</i><i class="p R">0,00 %</i><i class="qp R">0,00</i><i class="qf R">42,00</i><i class="u2 L">Fls</i><i class="tot R">2 182,32 $</i><i class="au R">0,00 $</i><i class="at R">0,00 $</i><i class="ap R">0,00 %</i><i class="pf R">51,96 $</i><i class="mf R">2 182,32 $</i><span class="pl" style="left:636px"><b></b></span><span class="pl" style="left:721px;width:17px"><b></b></span></div>
<div class="r" style="top:609px"><i class="ind"></i><i class="x0"></i><span class="pl" style="left:32px"><b></b></span><i class="code L">102191</i><i class="cls L">06M</i><i class="nom L">Épinette Rég   1" x  4" x 12' Latte</i><i class="four L">Prix standard</i><i class="c1 R">0,23</i><i class="qd R">8 808,00</i><i class="u1 L">pi</i><i class="c2 R">2,74 $</i><i class="q R">734,00</i><i class="p R">0,00 %</i><i class="qp R">0,00</i><i class="qf R">734,00</i><i class="u2 L">unit</i><i class="tot R">2 011,16 $</i><i class="au R">0,00 $</i><i class="at R">0,00 $</i><i class="ap R">0,00 %</i><i class="pf R">2,74 $</i><i class="mf R">2 011,16 $</i><span class="pl" style="left:636px"><b></b></span><span class="pl" style="left:721px;width:17px"><b></b></span></div>
<div class="r" style="top:629px"><i class="ind"></i><i class="x0"></i><span class="pl" style="left:32px"><b></b></span><i class="code L">103352</i><i class="cls L">07M</i><i class="nom L">Panneau Isolant Isoclad Carré 1-1/2" x 4' x 9' R6.7</i><i class="four L">Prix standard</i><i class="c1 R">0,75</i><i class="qd R">2 340,00</i><i class="u1 L">pi2</i><i class="c2 R">26,99 $</i><i class="q R">65,00</i><i class="p R">0,00 %</i><i class="qp R">0,00</i><i class="qf R">65,00</i><i class="u2 L">Fls</i><i class="tot R">1 754,35 $</i><i class="au R">0,00 $</i><i class="at R">0,00 $</i><i class="ap R">0,00 %</i><i class="pf R">26,99 $</i><i class="mf R">1 754,35 $</i><span class="pl" style="left:636px"><b></b></span><span class="pl" style="left:721px;width:17px"><b></b></span></div>
<div class="r" style="top:649px"><i class="ind"></i><i class="x0"></i><span class="pl" style="left:32px"><b></b></span><i class="code L">105650</i><i class="cls L">03M</i><i class="nom L">Armature Rég. 15M bar 20'</i><i class="four L">Prix standard</i><i class="c1 R">0,60</i><i class="qd R">2 620,00</i><i class="u1 L">pi</i><i class="c2 R">12,00 $</i><i class="q R">131,00</i><i class="p R">0,00 %</i><i class="qp R">0,00</i><i class="qf R">131,00</i><i class="u2 L">unit</i><i class="tot R">1 572,00 $</i><i class="au R">0,00 $</i><i class="at R">0,00 $</i><i class="ap R">0,00 %</i><i class="pf R">12,00 $</i><i class="mf R">1 572,00 $</i><span class="pl" style="left:636px"><b></b></span><span class="pl" style="left:721px;width:17px"><b></b></span></div>
<div class="r" style="top:669px"><i class="ind"></i><i class="x0"></i><span class="pl" style="left:32px"><b></b></span><i class="code L">107217</i><i class="cls L">09M</i><i class="nom L">Peinture et Apprêt Latex intérieur 3.78L</i><i class="four L">Prix standard</i><i class="c1 R">0,18</i><i class="qd R">7 600,00</i><i class="u1 L">pi2</i><i class="c2 R">35,00 $</i><i class="q R">38,00</i><i class="p R">0,00 %</i><i class="qp R">0,00</i><i class="qf R">38,00</i><i class="u2 L">Gal</i><i class="tot R">1 330,00 $</i><i class="au R">0,00 $</i><i class="at R">0,00 $</i><i class="ap R">0,00 %</i><i class="pf R">35,00 $</i><i class="mf R">1 330,00 $</i><span class="pl" style="left:636px"><b></b></span><span class="pl" style="left:721px;width:17px"><b></b></span></div>
<div class="r" style="top:689px"><i class="ind"></i><i class="x0"></i><span class="pl" style="left:32px"><b></b></span><i class="code L">107218</i><i class="cls L">09M</i><i class="nom L">Peinture Latex intérieur 3.7 L</i><i class="four L">Prix standard</i><i class="c1 R">0,18</i><i class="qd R">7 600,00</i><i class="u1 L">pi2</i><i class="c2 R">35,00 $</i><i class="q R">38,00</i><i class="p R">0,00 %</i><i class="qp R">0,00</i><i class="qf R">38,00</i><i class="u2 L">Gal</i><i class="tot R">1 330,00 $</i><i class="au R">0,00 $</i><i class="at R">0,00 $</i><i class="ap R">0,00 %</i><i class="pf R">35,00 $</i><i class="mf R">1 330,00 $</i><span class="pl" style="left:636px"><b></b></span><span class="pl" style="left:721px;width:17px"><b></b></span></div>
<div class="r" style="top:709px"><i class="ind"></i><i class="x0"></i><span class="pl" style="left:32px"><b></b></span><i class="code L">106695</i><i class="cls L">06M</i><i class="nom L">Contre-plaqué BC Fir standard 1/2" x 4' x 8'</i><i class="four L">Prix standard</i><i class="c1 R">0,92</i><i class="qd R">1 344,00</i><i class="u1 L">pi2</i><i class="c2 R">29,50 $</i><i class="q R">42,00</i><i class="p R">0,00 %</i><i class="qp R">0,00</i><i class="qf R">42,00</i><i class="u2 L">Fls</i><i class="tot R">1 239,00 $</i><i class="au R">0,00 $</i><i class="at R">0,00 $</i><i class="ap R">0,00 %</i><i class="pf R">29,50 $</i><i class="mf R">1 239,00 $</i><span class="pl" style="left:636px"><b></b></span><span class="pl" style="left:721px;width:17px"><b></b></span></div>
<div class="r" style="top:729px"><i class="ind"></i><i class="x0"></i><span class="pl" style="left:32px"><b></b></span><i class="code L">103127</i><i class="cls L">06M</i><i class="nom L">Épinette Sec  2" x  4" x 10'</i><i class="four L">Prix standard</i><i class="c1 R">0,41</i><i class="qd R">2 970,00</i><i class="u1 L">pi</i><i class="c2 R">4,09 $</i><i class="q R">297,00</i><i class="p R">0,00 %</i><i class="qp R">0,00</i><i class="qf R">297,00</i><i class="u2 L">unit</i><i class="tot R">1 214,73 $</i><i class="au R">0,00 $</i><i class="at R">0,00 $</i><i class="ap R">0,00 %</i><i class="pf R">4,09 $</i><i class="mf R">1 214,73 $</i><span class="pl" style="left:636px"><b></b></span><span class="pl" style="left:721px;width:17px"><b></b></span></div>
<div class="r" style="top:749px"><i class="ind"></i><i class="x0"></i><span class="pl" style="left:32px"><b></b></span><i class="code L">102226</i><i class="cls L">06M</i><i class="nom L">Épinette Sec  2" x 12" x 12'</i><i class="four L">Prix standard</i><i class="c1 R">2,27</i><i class="qd R">516,00</i><i class="u1 L">pi</i><i class="c2 R">27,27 $</i><i class="q R">43,00</i><i class="p R">0,00 %</i><i class="qp R">0,00</i><i class="qf R">43,00</i><i class="u2 L">unit</i><i class="tot R">1 172,61 $</i><i class="au R">0,00 $</i><i class="at R">0,00 $</i><i class="ap R">0,00 %</i><i class="pf R">27,27 $</i><i class="mf R">1 172,61 $</i><span class="pl" style="left:636px"><b></b></span><span class="pl" style="left:721px;width:17px"><b></b></span></div>
<div class="r" style="top:769px"><i class="ind"></i><i class="x0"></i><span class="pl" style="left:32px"><b></b></span><i class="code L">107281</i><i class="cls L">07M</i><i class="nom L">Isolant Styrofoam SM Dow R5  1" x 2' x 8'</i><i class="four L">Prix standard</i><i class="c1 R">1,00</i><i class="qd R">1 152,00</i><i class="u1 L">pi2</i><i class="c2 R">16,00 $</i><i class="q R">72,00</i><i class="p R">0,00 %</i><i class="qp R">0,00</i><i class="qf R">72,00</i><i class="u2 L">Fls</i><i class="tot R">1 152,00 $</i><i class="au R">0,00 $</i><i class="at R">0,00 $</i><i class="ap R">0,00 %</i><i class="pf R">16,00 $</i><i class="mf R">1 152,00 $</i><span class="pl" style="left:636px"><b></b></span><span class="pl" style="left:721px;width:17px"><b></b></span></div>
<div class="r" style="top:789px"><i class="ind"></i><i class="x0"></i><span class="pl" style="left:32px"><b></b></span><i class="code L">106708</i><i class="cls L">06M</i><i class="nom L">Contre-plaqué BC Fir Sélect traité 5/8" x 4' x 8'</i><i class="four L">Prix standard</i><i class="c1 R">1,37</i><i class="qd R">832,00</i><i class="u1 L">pi2</i><i class="c2 R">43,85 $</i><i class="q R">26,00</i><i class="p R">0,00 %</i><i class="qp R">0,00</i><i class="qf R">26,00</i><i class="u2 L">Fls</i><i class="tot R">1 140,10 $</i><i class="au R">0,00 $</i><i class="at R">0,00 $</i><i class="ap R">0,00 %</i><i class="pf R">43,85 $</i><i class="mf R">1 140,10 $</i><span class="pl" style="left:636px"><b></b></span><span class="pl" style="left:721px;width:17px"><b></b></span></div>
<div class="r" style="top:809px"><i class="ind"></i><i class="x0"></i><span class="pl" style="left:32px"><b></b></span><i class="code L">103809</i><i class="cls L">09M</i><i class="nom L">Composé à Joint Léger CGC (27 kg)</i><i class="four L">Prix standard</i><i class="c1 R">0,13</i><i class="qd R">7 500,00</i><i class="u1 L">pi2</i><i class="c2 R">20,00 $</i><i class="q R">50,00</i><i class="p R">0,00 %</i><i class="qp R">0,00</i><i class="qf R">50,00</i><i class="u2 L">unit</i><i class="tot R">1 000,00 $</i><i class="au R">0,00 $</i><i class="at R">0,00 $</i><i class="ap R">0,00 %</i><i class="pf R">20,00 $</i><i class="mf R">1 000,00 $</i><span class="pl" style="left:636px"><b></b></span><span class="pl" style="left:721px;width:17px"><b></b></span></div>
<div class="r" style="top:829px"><i class="ind"></i><i class="x0"></i><span class="pl" style="left:32px"><b></b></span><i class="code L">103897</i><i class="cls L">06M</i><i class="nom L">Contre-plaqué Épinette Std Carré 5/8" x 4' x 8'</i><i class="four L">Prix standard</i><i class="c1 R">2,19</i><i class="qd R">448,00</i><i class="u1 L">pi2</i><i class="c2 R">70,00 $</i><i class="q R">14,00</i><i class="p R">0,00 %</i><i class="qp R">0,00</i><i class="qf R">14,00</i><i class="u2 L">Fls</i><i class="tot R">980,00 $</i><i class="au R">0,00 $</i><i class="at R">0,00 $</i><i class="ap R">0,00 %</i><i class="pf R">70,00 $</i><i class="mf R">980,00 $</i><span class="pl" style="left:636px"><b></b></span><span class="pl" style="left:721px;width:17px"><b></b></span></div>
<div class="r" style="top:849px"><i class="ind"></i><i class="x0"></i><span class="pl" style="left:32px"><b></b></span><i class="code L">104068</i><i class="cls L">08M</i><i class="nom L">Porte Bostonian Pré-Montée 24" x 80" x 1-3/8" Bat 4-9/16" St-Jean</i><i class="four L">Prix standard</i><i class="c1 R"></i><i class="qd R"></i><i class="u1 L"></i><i class="c2 R">184,90 $</i><i class="q R">5,00</i><i class="p R">0,00 %</i><i class="qp R">0,00</i><i class="qf R">5,00</i><i class="u2 L">unit</i><i class="tot R">924,50 $</i><i class="au R">0,00 $</i><i class="at R">0,00 $</i><i class="ap R">0,00 %</i><i class="pf R">184,90 $</i><i class="mf R">924,50 $</i><span class="pl" style="left:636px"><b></b></span><span class="pl" style="left:721px;width:17px"><b></b></span></div>
<div class="r" style="top:869px"><i class="ind"></i><i class="x0"></i><span class="pl" style="left:32px"><b></b></span><i class="code L">102186</i><i class="cls L">06M</i><i class="nom L">Épinette Rég   2" x  4" x 12'</i><i class="four L">Prix standard</i><i class="c1 R">0,67</i><i class="qd R">1 320,00</i><i class="u1 L">pi</i><i class="c2 R">8,00 $</i><i class="q R">110,00</i><i class="p R">0,00 %</i><i class="qp R">0,00</i><i class="qf R">110,00</i><i class="u2 L">Mcx</i><i class="tot R">880,00 $</i><i class="au R">0,00 $</i><i class="at R">0,00 $</i><i class="ap R">0,00 %</i><i class="pf R">8,00 $</i><i class="mf R">880,00 $</i><span class="pl" style="left:636px"><b></b></span><span class="pl" style="left:721px;width:17px"><b></b></span></div>
<div class="r" style="top:889px"><i class="ind"></i><i class="x0"></i><span class="pl" style="left:32px"><b></b></span><i class="code L">103930</i><i class="cls L">07M</i><i class="nom L">Laine insonorisante Quiétude Owens Corning 3-1/2" x 15" (110 pi2)</i><i class="four L">Prix standard</i><i class="c1 R">0,24</i><i class="qd R">3 080,00</i><i class="u1 L">pi2</i><i class="c2 R">26,89 $</i><i class="q R">26,31</i><i class="p R">6,43 %</i><i class="qp R">1,69</i><i class="qf R">28,00</i><i class="u2 L">Pqt</i><i class="tot R">752,92 $</i><i class="au R">0,00 $</i><i class="at R">0,00 $</i><i class="ap R">0,00 %</i><i class="pf R">26,89 $</i><i class="mf R">752,92 $</i><span class="pl" style="left:636px"><b></b></span><span class="pl" style="left:721px;width:17px"><b></b></span></div>
<svg class="a" style="left:50px;top:295px" width="440" height="30" viewBox="50 295 440 30"><g transform="translate(0 0)" fill="#03121f"><path d="M92.6 304.2 L100 312.6 V318 Q102 320.4 104 318 V312.6 L111.4 304.2 Z"/><ellipse cx="102" cy="303.3" rx="9.1" ry="2.5" fill="#fff" stroke="#03121f" stroke-width="1.8"/><path d="M100.5 307.3 l3 3 m0 -3 l-3 3" stroke="#fff" stroke-width="1.1" fill="none"/><rect x="129.6" y="306.1" width="14.5" height="3" rx="1"/><rect x="124" y="311.5" width="14.7" height="3" rx="1"/><path d="M159 303.2 V316 H173.8" fill="none" stroke="#03121f" stroke-width="1.5"/><g stroke="#03121f" stroke-width="1.8"><path d="M162.3 314.6 V309.5"/><path d="M165.2 314.6 V311.5"/><path d="M168.1 314.6 V308.3"/><path d="M171 314.6 V304.6"/></g><rect x="192.2" y="301.6" width="11.8" height="2.3"/><rect x="188.2" y="305" width="19.8" height="9.4" rx="1.6"/><rect x="192.9" y="311.2" width="10.4" height="6.6" fill="#fff" stroke="#03121f" stroke-width="1.4"/><circle cx="190.7" cy="307.5" r=".8" fill="#fff"/></g><rect x="59.7" y="302.9" width="13.4" height="14" rx="1" fill="#f2f2f2" stroke="#a6a6a6" stroke-width="1.6"/><rect x="63" y="303" width="6.2" height="4.4" fill="#b4b4b4"/><rect x="65.6" y="303.6" width="1.8" height="2.4" fill="#f2f2f2"/><text x="223.6" y="317" font-family="Liberation Serif, serif" font-weight="bold" font-size="19" fill="#03121f" stroke="#03121f" stroke-width=".7" transform="translate(223.6 0) scale(.6 1) translate(-223.6 0)">1.0</text><path d="M241.2 317 V302" stroke="#03121f" stroke-width="1.5" fill="none"/><path d="M238.4 304.2 L241.2 300.2 L244 304.2 Z" fill="#03121f"/><text x="255.8" y="319" font-family="Liberation Sans, sans-serif" font-size="26" fill="#03121f" transform="translate(255.8 0) scale(.54 1) translate(-255.8 0)">%?</text><g fill="#03121f"><rect x="295" y="303" width="11.6" height="11" rx="1"/><path d="M306.6 306.4 H309.8 Q311.6 307.6 312.2 310.6 V314.2 H306.6 Z"/><circle cx="308.8" cy="315" r="2.6"/></g><path fill="#e8ecef" d="M308.2 307.6 H309.6 L310.8 309.8 H308.2 Z"/><path d="M296.7 309 V317.8 M292.3 313.4 H301.1" stroke="#5a6670" stroke-width="4" fill="none"/><path d="M296.7 309.6 V317.2 M292.9 313.4 H300.5" stroke="#fff" stroke-width="2.3" fill="none"/><rect x="325.6" y="301" width="17.2" height="18.2" fill="#fff" stroke="#03121f" stroke-width="1.3"/><rect x="325" y="300.3" width="18.4" height="4.6" fill="#03121f"/><rect x="327.6" y="299.6" width="2" height="2" fill="#fff"/><rect x="339" y="299.6" width="2" height="2" fill="#fff"/><rect x="331.4" y="307.7" width="2.2" height="2.2" fill="#03121f"/><rect x="335.2" y="307.7" width="2.2" height="2.2" fill="#03121f"/><rect x="338.9" y="307.7" width="2.2" height="2.2" fill="#03121f"/><rect x="327.6" y="311.7" width="2.2" height="2.2" fill="#03121f"/><rect x="331.4" y="311.7" width="2.2" height="2.2" fill="#03121f"/><rect x="335.2" y="311.7" width="2.2" height="2.2" fill="#03121f"/><rect x="338.9" y="311.7" width="2.2" height="2.2" fill="#03121f"/><rect x="327.6" y="315.4" width="2.2" height="2.2" fill="#03121f"/><rect x="331.4" y="315.4" width="2.2" height="2.2" fill="#03121f"/><rect x="335.2" y="315.4" width="2.2" height="2.2" fill="#03121f"/><rect x="356" y="308" width="20" height="4.2" rx=".8" fill="#03121f"/><rect x="358.4" y="309" width="1.3" height="1.6" fill="#e8e8e8"/><rect x="361.2" y="309" width="1.3" height="1.6" fill="#e8e8e8"/><rect x="364" y="309" width="1.3" height="1.6" fill="#e8e8e8"/><rect x="366.8" y="309" width="1.3" height="1.6" fill="#e8e8e8"/><rect x="369.6" y="309" width="1.3" height="1.6" fill="#e8e8e8"/><rect x="372.4" y="309" width="1.3" height="1.6" fill="#e8e8e8"/><text x="388.8" y="317.4" font-family="Liberation Sans, sans-serif" font-weight="bold" font-size="21" fill="#03121f">%</text><g fill="#03121f"><path d="M421.6 301.7 H432 A1.5 1.5 0 0 1 433.5 303.2 V305.5 H437.4 L439.8 309.6 V314.8 H420 V303.2 A1.5 1.5 0 0 1 421.6 301.7 Z"/><circle cx="424.8" cy="316" r="2.7"/><circle cx="436.1" cy="316" r="2.7"/></g><path fill="#fff" d="M434.4 306.6 H436.8 L438.6 310 H434.4 Z"/><g stroke="#03121f" fill="none"><path d="M457.1 300.6 V309 M452.9 304.8 H461.3" stroke-width="2"/><path d="M453.5 319.4 L471.5 301.3" stroke-width="1.5"/><path d="M463 315.6 H471.7" stroke-width="1.8"/></g></svg>
<div class="a" style="left:920px;top:532px;width:731px;height:346px;box-sizing:border-box;background:#f0f0f0;border:1px solid #cfcfcf;border-top-color:#2b3440;"></div>
<div class="a" style="left:920px;top:532px;width:1px;height:52px;background:linear-gradient(#2b3440 0,#2b3440 70%,#cfcfcf 100%);"></div>
<div class="a" style="left:1650px;top:532px;width:1px;height:52px;background:linear-gradient(#2b3440 0,#2b3440 70%,#cfcfcf 100%);"></div>
<div class="t lib" style="left:932.5px;top:544px;font-size:15px;line-height:20px;font-weight:normal;color:#9c9c9c;letter-spacing:-0.61px;">Prix / fournisseurs de l'item</div>
<svg class="a" style="left:1520px;top:545px" width="120" height="16" viewBox="1520 545 120 16"><g stroke="#b2b2b2" stroke-width="1" fill="none"><path d="M1525 554.5 H1535"/><rect x="1573.5" y="548.5" width="9" height="9"/><path d="M1621 548.5 l9.6 9.6 m0 -9.6 l-9.6 9.6"/></g></svg>
<div class="a" style="left:929px;top:584px;width:712px;height:287px;background:#fff;"></div>
<div class="a" style="left:929px;top:590px;width:711px;height:199px;box-sizing:border-box;border:1px solid #d5d5d5;"></div>
<div class="t lib" style="left:934.7px;top:584px;font-size:11px;line-height:13px;font-weight:normal;color:#2a2a2a;letter-spacing:-0.072px;padding:0 2px;background:#fff;">Prix / fournisseurs de l'item</div>
<div class="a" style="left:937px;top:597px;width:695px;height:35px;box-sizing:border-box;background:#fff;border-top:2px solid #6e6e6e;border-left:1px solid #555;"></div>
<div class="a" style="left:1631px;top:598px;width:1px;height:34px;background:#e3e3e3;"></div>
<div class="a" style="left:938px;top:598px;width:33px;height:33px;box-sizing:border-box;border:1px solid #000;"></div>
<svg class="a" style="left:940px;top:600px" width="690" height="31" viewBox="940 600 690 31"><g transform="translate(989 305.6)" fill="#03121f"><path d="M92.6 304.2 L100 312.6 V318 Q102 320.4 104 318 V312.6 L111.4 304.2 Z"/><ellipse cx="102" cy="303.3" rx="9.1" ry="2.5" fill="#fff" stroke="#03121f" stroke-width="1.8"/><path d="M100.5 307.3 l3 3 m0 -3 l-3 3" stroke="#fff" stroke-width="1.1" fill="none"/><rect x="129.6" y="306.1" width="14.5" height="3" rx="1"/><rect x="124" y="311.5" width="14.7" height="3" rx="1"/><path d="M159 303.2 V316 H173.8" fill="none" stroke="#03121f" stroke-width="1.5"/><g stroke="#03121f" stroke-width="1.8"><path d="M162.3 314.6 V309.5"/><path d="M165.2 314.6 V311.5"/><path d="M168.1 314.6 V308.3"/><path d="M171 314.6 V304.6"/></g><rect x="192.2" y="301.6" width="11.8" height="2.3"/><rect x="188.2" y="305" width="19.8" height="9.4" rx="1.6"/><rect x="192.9" y="311.2" width="10.4" height="6.6" fill="#fff" stroke="#03121f" stroke-width="1.4"/><circle cx="190.7" cy="307.5" r=".8" fill="#fff"/></g><path d="M955.2 606.8 V623.2 M947 615 H963.4" stroke="#000" stroke-width="3.4" fill="none"/><g fill="#8c8c8c"><rect x="976.8" y="607.6" width="20.2" height="2.5"/><rect x="982.4" y="605.4" width="9" height="3.4" rx="1"/><rect x="978.4" y="610.8" width="17.2" height="13.2" rx="1"/></g><g stroke="#cfcfcf" stroke-width="1.3"><path d="M981.6 613 V622.4 M984.9 613 V622.4 M988.2 613 V622.4 M991.5 613 V622.4"/></g><g stroke="#03121f" stroke-width="1.6" fill="none"><path d="M1023.2 624.5 V608.5 M1016.6 614.6 L1023.2 608 L1029.8 614.6"/><path d="M1055.2 607.6 V623.6 M1048.6 617.6 L1055.2 624.2 L1061.8 617.6"/></g><g fill="none" stroke="#03121f" stroke-width="1.35"><path d="M1212.2 614.4 A7.2 7.2 0 0 1 1225 611.4"/><path d="M1226.3 616.6 A7.2 7.2 0 0 1 1213.5 619.6"/></g><path fill="#03121f" d="M1227.6 608 V613 H1222.6 Z"/><path fill="#03121f" d="M1210.9 623 V618 H1215.9 Z"/><text x="1247.8" y="623.5" font-family="DejaVu Sans, sans-serif" font-weight="bold" font-size="22.4" fill="#03121f">$</text></svg>
<div class="a" style="left:937px;top:633px;width:696px;height:150px;background:#ababab;border-left:1px solid #6e6e6e;border-bottom:1px solid #6e6e6e;box-sizing:border-box;"></div>
<div class="a" style="left:938px;top:633px;width:695px;height:21px;background:#222a36;"></div>
<div class="h dh" style="top:633px;left:938px;width:20px;"></div>
<div class="h dh" style="top:633px;left:958px;width:45px;letter-spacing:-0.324px;">Choix</div>
<div class="h dh" style="top:633px;left:1003px;width:46px;letter-spacing:-0.222px;">Projet</div>
<div class="h dh" style="top:633px;left:1049px;width:98px;letter-spacing:-0.625px;"><u>Nom fournisseur</u></div>
<div class="h dh" style="top:633px;left:1147px;width:59px;letter-spacing:0.0px;"><u>Prix NET</u></div>
<div class="h dh" style="top:633px;left:1206px;width:63px;letter-spacing:-0.463px;">Un. achat</div>
<div class="h dh" style="top:633px;left:1269px;width:122px;letter-spacing:-0.642px;">Qté stock / un. achat.</div>
<div class="h dh" style="top:633px;left:1391px;width:100px;letter-spacing:-0.571px;"><u>Prix / un. gestion</u></div>
<div class="h dh" style="top:633px;left:1491px;width:72px;letter-spacing:-0.626px;">Un. gestion</div>
<div class="h dh" style="top:633px;left:1563px;width:70px;text-align:left;padding-left:7px;border-right:none;letter-spacing:-.6px;"><u>Prix / un. es</u></div>
<div class="a" style="left:938px;top:654px;width:695px;height:20px;background:#e0f5f3;"></div>
<div class="a" style="left:938px;top:654px;width:19px;height:19px;background:#f0f0f0;border-right:1px solid #8a8a8a;border-bottom:1px solid #8a8a8a;"></div>
<div class="a" style="left:938px;top:674px;width:19px;height:19px;background:#f0f0f0;border-right:1px solid #8a8a8a;border-bottom:1px solid #8a8a8a;"></div>
<div class="a" style="left:938px;top:694px;width:19px;height:19px;background:#f0f0f0;border-right:1px solid #8a8a8a;border-bottom:1px solid #8a8a8a;"></div>
<div class="a" style="left:958px;top:674px;width:675px;height:19px;background:#0078d7;"></div>
<div class="a" style="left:958px;top:694px;width:675px;height:19px;background:#fff;"></div>
<div class="a" style="left:958px;top:693px;width:675px;height:1px;background:#f0f0f0;"></div>
<div class="a" style="left:958px;top:713px;width:675px;height:1px;background:#8a8a8a;"></div>
<div class="a" style="left:1269px;top:694px;width:121px;height:19px;background:#d3d3d3;"></div>
<div class="a" style="left:1491px;top:694px;width:71px;height:19px;background:#d3d3d3;"></div>
<div class="a" style="left:1563px;top:694px;width:70px;height:19px;background:#d3d3d3;"></div>
<div class="a" style="left:1002px;top:674px;width:1px;height:19px;background:#5aa7e6;"></div>
<div class="a" style="left:1002px;top:694px;width:1px;height:19px;background:#ececec;"></div>
<div class="a" style="left:1048px;top:674px;width:1px;height:19px;background:#5aa7e6;"></div>
<div class="a" style="left:1048px;top:694px;width:1px;height:19px;background:#ececec;"></div>
<div class="a" style="left:1146px;top:674px;width:1px;height:19px;background:#5aa7e6;"></div>
<div class="a" style="left:1146px;top:694px;width:1px;height:19px;background:#ececec;"></div>
<div class="a" style="left:1205px;top:674px;width:1px;height:19px;background:#5aa7e6;"></div>
<div class="a" style="left:1205px;top:694px;width:1px;height:19px;background:#ececec;"></div>
<div class="a" style="left:1268px;top:674px;width:1px;height:19px;background:#5aa7e6;"></div>
<div class="a" style="left:1268px;top:694px;width:1px;height:19px;background:#ececec;"></div>
<div class="a" style="left:1390px;top:674px;width:1px;height:19px;background:#5aa7e6;"></div>
<div class="a" style="left:1390px;top:694px;width:1px;height:19px;background:#ececec;"></div>
<div class="a" style="left:1490px;top:674px;width:1px;height:19px;background:#5aa7e6;"></div>
<div class="a" style="left:1490px;top:694px;width:1px;height:19px;background:#ececec;"></div>
<div class="a" style="left:1562px;top:674px;width:1px;height:19px;background:#5aa7e6;"></div>
<div class="a" style="left:1562px;top:694px;width:1px;height:19px;background:#ececec;"></div>
<svg class="a" style="left:973px;top:657px" width="13" height="13" viewBox="0 0 13 13"><defs><linearGradient id="gb" x1="0" y1="0" x2="1" y2="1"><stop offset="0" stop-color="#3bb0de"/><stop offset="1" stop-color="#0f5c9c"/></linearGradient><linearGradient id="gw" x1="0" y1="0" x2="1" y2="1"><stop offset="0" stop-color="#d8d8dc"/><stop offset="1" stop-color="#fdfdfd"/></linearGradient></defs><rect x=".5" y=".5" width="12" height="12" fill="#f4f4f4" stroke="#8e8f8f"/><rect x="2.5" y="2.5" width="8" height="8" fill="url(#gw)" stroke="#e2e2e6" stroke-width="1"/><rect x="3" y="3" width="7" height="7" fill="url(#gb)" stroke="#1c5180" stroke-width="1"/></svg>
<svg class="a" style="left:1018px;top:657px" width="13" height="13" viewBox="0 0 13 13"><defs><linearGradient id="gb" x1="0" y1="0" x2="1" y2="1"><stop offset="0" stop-color="#3bb0de"/><stop offset="1" stop-color="#0f5c9c"/></linearGradient><linearGradient id="gw" x1="0" y1="0" x2="1" y2="1"><stop offset="0" stop-color="#d8d8dc"/><stop offset="1" stop-color="#fdfdfd"/></linearGradient></defs><rect x=".5" y=".5" width="12" height="12" fill="#f4f4f4" stroke="#8e8f8f"/><rect x="2.5" y="2.5" width="8" height="8" fill="url(#gw)" stroke="#e2e2e6" stroke-width="1"/><rect x="3" y="3" width="7" height="7" fill="url(#gb)" stroke="#1c5180" stroke-width="1"/></svg>
<svg class="a" style="left:973px;top:677px" width="13" height="13" viewBox="0 0 13 13"><defs><linearGradient id="gb" x1="0" y1="0" x2="1" y2="1"><stop offset="0" stop-color="#3bb0de"/><stop offset="1" stop-color="#0f5c9c"/></linearGradient><linearGradient id="gw" x1="0" y1="0" x2="1" y2="1"><stop offset="0" stop-color="#d8d8dc"/><stop offset="1" stop-color="#fdfdfd"/></linearGradient></defs><rect x=".5" y=".5" width="12" height="12" fill="#f4f4f4" stroke="#8e8f8f"/><rect x="2.5" y="2.5" width="8" height="8" fill="url(#gw)" stroke="#e2e2e6" stroke-width="1"/><path d="M3.2 6.4 L5.6 9.4 L10 3.2" fill="none" stroke="#3e4fa3" stroke-width="1.7"/></svg>
<svg class="a" style="left:1018px;top:677px" width="13" height="13" viewBox="0 0 13 13"><defs><linearGradient id="gb" x1="0" y1="0" x2="1" y2="1"><stop offset="0" stop-color="#3bb0de"/><stop offset="1" stop-color="#0f5c9c"/></linearGradient><linearGradient id="gw" x1="0" y1="0" x2="1" y2="1"><stop offset="0" stop-color="#d8d8dc"/><stop offset="1" stop-color="#fdfdfd"/></linearGradient></defs><rect x=".5" y=".5" width="12" height="12" fill="#f4f4f4" stroke="#8e8f8f"/><rect x="2.5" y="2.5" width="8" height="8" fill="url(#gw)" stroke="#e2e2e6" stroke-width="1"/></svg>
<svg class="a" style="left:973px;top:697px" width="13" height="13" viewBox="0 0 13 13"><defs><linearGradient id="gb" x1="0" y1="0" x2="1" y2="1"><stop offset="0" stop-color="#3bb0de"/><stop offset="1" stop-color="#0f5c9c"/></linearGradient><linearGradient id="gw" x1="0" y1="0" x2="1" y2="1"><stop offset="0" stop-color="#d8d8dc"/><stop offset="1" stop-color="#fdfdfd"/></linearGradient></defs><rect x=".5" y=".5" width="12" height="12" fill="#f4f4f4" stroke="#8e8f8f"/><rect x="2.5" y="2.5" width="8" height="8" fill="url(#gw)" stroke="#e2e2e6" stroke-width="1"/></svg>
<svg class="a" style="left:1018px;top:697px" width="13" height="13" viewBox="0 0 13 13"><defs><linearGradient id="gb" x1="0" y1="0" x2="1" y2="1"><stop offset="0" stop-color="#3bb0de"/><stop offset="1" stop-color="#0f5c9c"/></linearGradient><linearGradient id="gw" x1="0" y1="0" x2="1" y2="1"><stop offset="0" stop-color="#d8d8dc"/><stop offset="1" stop-color="#fdfdfd"/></linearGradient></defs><rect x=".5" y=".5" width="12" height="12" fill="#f4f4f4" stroke="#8e8f8f"/><rect x="2.5" y="2.5" width="8" height="8" fill="url(#gw)" stroke="#e2e2e6" stroke-width="1"/><path d="M3.2 6.4 L5.6 9.4 L10 3.2" fill="none" stroke="#3e4fa3" stroke-width="1.7"/></svg>
<div class="t" style="left:1052px;top:674px;line-height:19px;color:#fff;">Prix standard</div>
<div class="t" style="left:1146px;width:56px;text-align:right;top:674px;line-height:19px;color:#fff;">200,00 $</div>
<div class="t" style="left:1208.5px;top:674px;line-height:19px;color:#fff;">m3</div>
<div class="t" style="left:1300px;width:87px;text-align:right;top:674px;line-height:19px;color:#fff;">1,00</div>
<div class="t" style="left:1400px;width:87px;text-align:right;top:674px;line-height:19px;color:#fff;">200,00 $</div>
<div class="t" style="left:1494.5px;top:674px;line-height:19px;color:#fff;">m3</div>
<div class="t" style="left:1570px;width:61px;text-align:right;top:674px;line-height:19px;color:#fff;">0,00</div>
<div class="t" style="left:1052px;top:694px;line-height:19px;color:#000;">Notre entreprise</div>
<div class="t" style="left:1146px;width:56px;text-align:right;top:694px;line-height:19px;color:#000;">210,00 $</div>
<div class="t" style="left:1208.5px;top:694px;line-height:19px;color:#000;">m3</div>
<div class="t" style="left:1300px;width:87px;text-align:right;top:694px;line-height:19px;color:#000;">1,00</div>
<div class="t" style="left:1400px;width:87px;text-align:right;top:694px;line-height:19px;color:#000;">210,00 $</div>
<div class="t" style="left:1494.5px;top:694px;line-height:19px;color:#000;">m3</div>
<div class="t" style="left:1570px;width:61px;text-align:right;top:694px;line-height:19px;color:#000;">0,00</div>
<div class="a" style="left:938px;top:765px;width:695px;height:17px;background:#f0f0f0;"></div>
<div class="a" style="left:955px;top:765px;width:548px;height:17px;background:#cdcdcd;"></div>
<svg class="a" style="left:938px;top:765px" width="695" height="17" viewBox="938 765 695 17"><g fill="none" stroke="#505050" stroke-width="1.6"><path d="M948.6 769.6 L944.4 773.5 L948.6 777.4"/><path d="M1621.6 769.6 L1625.8 773.5 L1621.6 777.4"/></g></svg>
<div class="a" style="left:929px;top:797px;width:407px;height:72px;box-sizing:border-box;border:1px solid #d5d5d5;"></div>
<div class="t lib" style="left:934.7px;top:792px;font-size:11px;line-height:13px;font-weight:normal;color:#2a2a2a;letter-spacing:-0.494px;padding:0 2px;background:#fff;">Résumé</div>
<div class="t lib" style="left:955.3px;top:806px;font-size:11px;line-height:13px;font-weight:normal;color:#454545;letter-spacing:0.074px;text-decoration:underline;">Unité achat</div>
<div class="t lib" style="left:955.3px;top:819.5px;font-size:11px;line-height:13px;font-weight:normal;color:#454545;letter-spacing:-0.423px;">1 m3</div>
<div class="t lib" style="left:955.3px;top:842.5px;font-size:11px;line-height:13px;font-weight:normal;color:#454545;letter-spacing:-0.084px;">200,00$ / m3</div>
<div class="t lib" style="left:1083.3px;top:806px;font-size:11px;line-height:13px;font-weight:normal;color:#454545;letter-spacing:0.067px;text-decoration:underline;">Unité de gestion</div>
<div class="t lib" style="left:1083.3px;top:819.5px;font-size:11px;line-height:13px;font-weight:normal;color:#454545;letter-spacing:-0.211px;">1,000 m3</div>
<div class="t lib" style="left:1083.3px;top:842.5px;font-size:11px;line-height:13px;font-weight:normal;color:#454545;letter-spacing:-0.084px;">200,00$ / m3</div>
<div class="t lib" style="left:1211.2px;top:806px;font-size:11px;line-height:13px;font-weight:normal;color:#454545;letter-spacing:0.055px;text-decoration:underline;">unité d'estimation</div>
<div class="t lib" style="left:1211.2px;top:819.5px;font-size:11px;line-height:13px;font-weight:normal;color:#454545;letter-spacing:-0.258px;">0,000</div>
<div class="t lib" style="left:1211.2px;top:842.5px;font-size:11px;line-height:13px;font-weight:normal;color:#454545;letter-spacing:-0.023px;">0,00$ /</div>
<div class="t lib rs" style="left:1059.5px;top:820px;">=</div>
<div class="t lib rs" style="left:1059.5px;top:843px;">=</div>
<div class="t lib rs" style="left:1187.5px;top:820px;">=</div>
<div class="t lib rs" style="left:1187.5px;top:843px;">=</div>
<div class="a lib" style="left:1503px;top:840px;width:134px;height:24px;box-sizing:border-box;border:1px solid #adadad;background:#e1e1e1;text-align:center;font-size:12px;line-height:22px;color:#333;">OK</div>
<svg class="a" style="left:1640px;top:866px" width="10" height="11" viewBox="1640 866 10 11"><rect x="1647" y="868" width="2" height="2" fill="#8c8c8c"/><rect x="1647" y="871" width="2" height="2" fill="#8c8c8c"/><rect x="1647" y="874" width="2" height="2" fill="#8c8c8c"/><rect x="1644" y="871" width="2" height="2" fill="#8c8c8c"/><rect x="1644" y="874" width="2" height="2" fill="#8c8c8c"/><rect x="1641" y="874" width="2" height="2" fill="#8c8c8c"/></svg>
<svg class="a" style="left:0;top:0;pointer-events:none" width="1818" height="914" viewBox="0 0 1818 914"><defs><filter id="sh" x="-20%" y="-20%" width="150%" height="150%"><feGaussianBlur in="SourceAlpha" stdDeviation="1.4"/><feOffset dx="2.5" dy="2.5"/><feComponentTransfer><feFuncA type="linear" slope=".45"/></feComponentTransfer><feMerge><feMergeNode/><feMergeNode in="SourceGraphic"/></feMerge></filter></defs><g filter="url(#sh)"><path d="M659.0 411.5 L765.8 383.0" stroke="#8f1010" stroke-width="1.7" fill="none"/><path d="M775.0 380.6 L765.0 387.6 L762.8 379.5 Z" fill="#8f1010"/><path d="M656.0 434.2 L921.0 585.9" stroke="#8f1010" stroke-width="1.7" fill="none"/><path d="M929.2 590.6 L917.1 588.5 L921.3 581.2 Z" fill="#8f1010"/><path d="M880.0 693.5 L950.1 689.5" stroke="#8f1010" stroke-width="1.7" fill="none"/><path d="M959.6 689.0 L948.4 693.8 L947.9 685.5 Z" fill="#8f1010"/><path d="M953.3 556.0 L955.1 585.5" stroke="#8f1010" stroke-width="1.7" fill="none"/><path d="M955.7 595.0 L950.8 583.8 L959.2 583.3 Z" fill="#8f1010"/><path d="M1212.0 271.5 L989.3 368.6" stroke="#8f1010" stroke-width="1.7" fill="none"/><path d="M980.6 372.4 L989.5 364.0 L992.8 371.7 Z" fill="#8f1010"/><path d="M1216.0 279.6 L1121.8 361.0" stroke="#8f1010" stroke-width="1.7" fill="none"/><path d="M1114.6 367.2 L1120.6 356.5 L1126.0 362.9 Z" fill="#8f1010"/><path d="M1225.2 284.0 L1232.1 360.7" stroke="#8f1010" stroke-width="1.7" fill="none"/><path d="M1233.0 370.2 L1227.8 359.1 L1236.1 358.4 Z" fill="#8f1010"/><rect x="960.5" y="639.5" width="35.5" height="81.5" fill="none" stroke="#8f1010" stroke-width="2"/><circle cx="649.9" cy="422.2" r="14.8" fill="#8c0606"/><circle cx="867.3" cy="694.5" r="14.8" fill="#8c0606"/><circle cx="952.3" cy="543" r="14.8" fill="#8c0606"/><circle cx="1223.3" cy="270.5" r="14.8" fill="#8c0606"/></g><text x="649.9" y="428.5" text-anchor="middle" font-family="Liberation Sans, sans-serif" font-size="18" fill="#fff">1</text><text x="867.3" y="700.8" text-anchor="middle" font-family="Liberation Sans, sans-serif" font-size="18" fill="#fff">2</text><text x="952.3" y="549.3" text-anchor="middle" font-family="Liberation Sans, sans-serif" font-size="18" fill="#fff">3</text><text x="1223.3" y="276.8" text-anchor="middle" font-family="Liberation Sans, sans-serif" font-size="18" fill="#fff">4</text></svg>
</div></div>
</body></html>
